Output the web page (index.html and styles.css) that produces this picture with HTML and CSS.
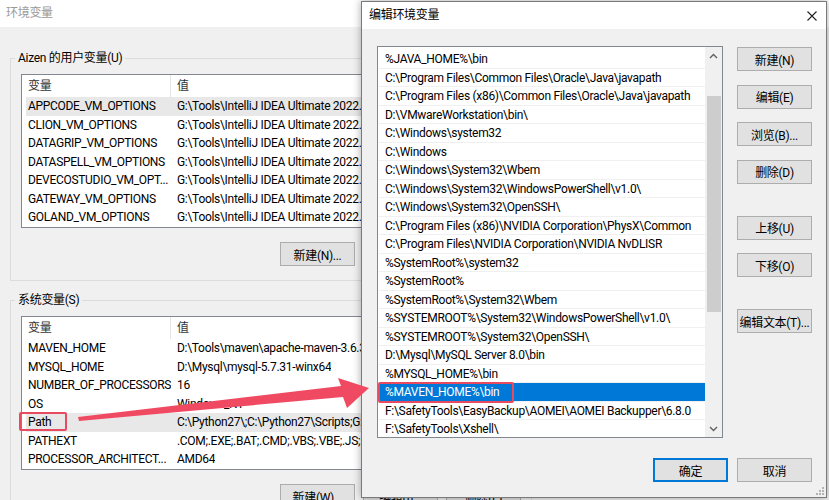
FILE: index.html
```html
<!DOCTYPE html>
<html>
<head>
  <meta charset="utf-8">
  <title>环境变量</title>
  <link rel="stylesheet" href="styles.css">
</head>
<body>
  <!-- window behind: 环境变量 -->
  <div class="env-window">
    <div class="titlebar inactive">环境变量</div>
    <div class="env-body">
      <fieldset class="group">
        <legend>Aizen 的用户变量(U)</legend>
        <div class="listview">
          <div class="lv-header"><span class="col-name">变量</span><span class="col-value">值</span></div>
          <div class="lv-row selected"><span class="col-name">APPCODE_VM_OPTIONS</span><span class="col-value">G:\Tools\IntelliJ IDEA Ultimate 2022.1\bin\appcode.vmoptions</span></div>
          <div class="lv-row"><span class="col-name">CLION_VM_OPTIONS</span><span class="col-value">G:\Tools\IntelliJ IDEA Ultimate 2022.1\bin\clion.vmoptions</span></div>
          <div class="lv-row"><span class="col-name">DATAGRIP_VM_OPTIONS</span><span class="col-value">G:\Tools\IntelliJ IDEA Ultimate 2022.1\bin\datagrip.vmoptions</span></div>
          <div class="lv-row"><span class="col-name">DATASPELL_VM_OPTIONS</span><span class="col-value">G:\Tools\IntelliJ IDEA Ultimate 2022.1\bin\dataspell.vmoptions</span></div>
          <div class="lv-row"><span class="col-name">DEVECOSTUDIO_VM_OPT...</span><span class="col-value">G:\Tools\IntelliJ IDEA Ultimate 2022.1\bin\devecostudio.vmoptions</span></div>
          <div class="lv-row"><span class="col-name">GATEWAY_VM_OPTIONS</span><span class="col-value">G:\Tools\IntelliJ IDEA Ultimate 2022.1\bin\gateway.vmoptions</span></div>
          <div class="lv-row"><span class="col-name">GOLAND_VM_OPTIONS</span><span class="col-value">G:\Tools\IntelliJ IDEA Ultimate 2022.1\bin\goland.vmoptions</span></div>
        </div>
        <div class="group-buttons">
          <button class="btn">新建(N)...</button>
          <button class="btn">编辑(E)...</button>
          <button class="btn">删除(D)</button>
        </div>
      </fieldset>

      <fieldset class="group">
        <legend>系统变量(S)</legend>
        <div class="listview">
          <div class="lv-header"><span class="col-name">变量</span><span class="col-value">值</span></div>
          <div class="lv-row"><span class="col-name">MAVEN_HOME</span><span class="col-value">D:\Tools\maven\apache-maven-3.6.3</span></div>
          <div class="lv-row"><span class="col-name">MYSQL_HOME</span><span class="col-value">D:\Mysql\mysql-5.7.31-winx64</span></div>
          <div class="lv-row"><span class="col-name">NUMBER_OF_PROCESSORS</span><span class="col-value">16</span></div>
          <div class="lv-row"><span class="col-name">OS</span><span class="col-value">Windows_NT</span></div>
          <div class="lv-row selected"><span class="col-name">Path</span><span class="col-value">C:\Python27\;C:\Python27\Scripts;G:\Tools\bin;</span></div>
          <div class="lv-row"><span class="col-name">PATHEXT</span><span class="col-value">.COM;.EXE;.BAT;.CMD;.VBS;.VBE;.JS;.JSE;.WSF;.WSH;.MSC</span></div>
          <div class="lv-row"><span class="col-name">PROCESSOR_ARCHITECT...</span><span class="col-value">AMD64</span></div>
        </div>
        <div class="group-buttons">
          <button class="btn">新建(W)...</button>
          <button class="btn">编辑(I)...</button>
          <button class="btn">删除(L)</button>
        </div>
      </fieldset>
    </div>
  </div>

  <!-- active dialog: 编辑环境变量 -->
  <div class="dialog">
    <div class="titlebar">
      <span>编辑环境变量</span>
      <svg class="close-icon" width="10" height="10" viewBox="0 0 10 10">
        <path d="M0.5 0.5 L9.5 9.5 M9.5 0.5 L0.5 9.5" stroke="#222" stroke-width="1.1" fill="none"/>
      </svg>
    </div>
    <div class="dialog-body">
      <div class="dialog-main">
        <div class="path-list">
          <div class="path-items">
            <div class="path-item">%JAVA_HOME%\bin</div>
            <div class="path-item">C:\Program Files\Common Files\Oracle\Java\javapath</div>
            <div class="path-item">C:\Program Files (x86)\Common Files\Oracle\Java\javapath</div>
            <div class="path-item">D:\VMwareWorkstation\bin\</div>
            <div class="path-item">C:\Windows\system32</div>
            <div class="path-item">C:\Windows</div>
            <div class="path-item">C:\Windows\System32\Wbem</div>
            <div class="path-item">C:\Windows\System32\WindowsPowerShell\v1.0\</div>
            <div class="path-item">C:\Windows\System32\OpenSSH\</div>
            <div class="path-item">C:\Program Files (x86)\NVIDIA Corporation\PhysX\Common</div>
            <div class="path-item">C:\Program Files\NVIDIA Corporation\NVIDIA NvDLISR</div>
            <div class="path-item">%SystemRoot%\system32</div>
            <div class="path-item">%SystemRoot%</div>
            <div class="path-item">%SystemRoot%\System32\Wbem</div>
            <div class="path-item">%SYSTEMROOT%\System32\WindowsPowerShell\v1.0\</div>
            <div class="path-item">%SYSTEMROOT%\System32\OpenSSH\</div>
            <div class="path-item">D:\Mysql\MySQL Server 8.0\bin</div>
            <div class="path-item">%MYSQL_HOME%\bin</div>
            <div class="path-item selected">%MAVEN_HOME%\bin</div>
            <div class="path-item">F:\SafetyTools\EasyBackup\AOMEI\AOMEI Backupper\6.8.0</div>
            <div class="path-item">F:\SafetyTools\Xshell\</div>
          </div>
          <div class="scrollbar">
            <div class="scroll-arrow">
              <svg width="9" height="6" viewBox="0 0 9 6"><polyline points="1,5 4.5,1.5 8,5" fill="none" stroke="#606060" stroke-width="1.4"/></svg>
            </div>
            <div class="scroll-track-top"></div>
            <div class="scroll-thumb"></div>
            <div class="scroll-track"></div>
            <div class="scroll-arrow">
              <svg width="9" height="6" viewBox="0 0 9 6"><polyline points="1,1 4.5,4.5 8,1" fill="none" stroke="#606060" stroke-width="1.4"/></svg>
            </div>
          </div>
        </div>
        <div class="side-buttons">
          <button class="btn">新建(N)</button>
          <button class="btn">编辑(E)</button>
          <button class="btn">浏览(B)...</button>
          <button class="btn">删除(D)</button>
          <button class="btn spaced">上移(U)</button>
          <button class="btn">下移(O)</button>
          <button class="btn spaced">编辑文本(T)...</button>
        </div>
      </div>
      <div class="dialog-footer">
        <button class="btn default">确定</button>
        <button class="btn">取消</button>
      </div>
    </div>
    <svg class="grip" width="10" height="10" viewBox="0 0 10 10" fill="#b4b4b4">
      <rect x="7" y="1" width="2" height="2"/>
      <rect x="4" y="4" width="2" height="2"/><rect x="7" y="4" width="2" height="2"/>
      <rect x="1" y="7" width="2" height="2"/><rect x="4" y="7" width="2" height="2"/><rect x="7" y="7" width="2" height="2"/>
    </svg>
  </div>

  <!-- annotations -->
  <div class="mark mark-path"></div>
  <div class="mark mark-maven"></div>
  <svg class="arrow" width="829" height="500" viewBox="0 0 829 500">
    <polygon points="78,417 341,386 338,378 369,388 347,408 343,397 79,421" fill="#f04a62"/>
  </svg>
</body>
</html>
```

FILE: styles.css
```css
* {
  box-sizing: border-box;
}

body {
  margin: 0;
  width: 829px;
  height: 500px;
  overflow: hidden;
  position: relative;
  background-color: #f0f0f0;
  font-family: Roboto, "Noto Sans CJK SC", sans-serif;
  font-size: 12px;
  letter-spacing: -0.3px;
  color: #000;
}

.env-window {
  height: 500px;
  overflow: hidden;
}

.titlebar {
  height: 27px;
  line-height: 27px;
  padding-left: 6px;
  background-color: #fff;
}

.titlebar.inactive {
  color: #999;
}

.env-body {
  padding: 23px 0 0 10px;
}

.group {
  width: 522px;
  min-width: 0;
  margin: 0 0 11px 0;
  padding: 0 10px 14px 10px;
  border: 1px solid #dcdcdc;
}

.group legend {
  margin-left: -6px;
  padding: 0 3px;
  line-height: 16px;
}

.listview {
  margin-top: 8px;
  height: 154px;
  padding-left: 4px;
  background-color: #fff;
  border: 1px solid #828790;
  overflow: hidden;
}

.lv-header {
  display: flex;
  height: 22px;
  line-height: 22px;
  color: #333;
}

.lv-header .col-name {
  border-right: 1px solid #e5e5e5;
}

.lv-row {
  display: flex;
  height: 18.5px;
  line-height: 18.5px;
}

.lv-row.selected {
  background-color: #e8e8e8;
}

.col-name {
  width: 145px;
  flex-shrink: 0;
  padding-left: 2px;
  white-space: nowrap;
  overflow: hidden;
}

.col-value {
  padding-left: 6px;
  white-space: nowrap;
  overflow: hidden;
}

.group-buttons {
  display: flex;
  justify-content: flex-end;
  gap: 8px;
  margin-top: 14px;
}

.btn {
  width: 75px;
  height: 24px;
  padding: 0;
  background-color: #e1e1e1;
  border: 1px solid #adadad;
  font-family: inherit;
  font-size: 12px;
  letter-spacing: -0.3px;
  color: #000;
}

.btn.default {
  border-color: #0078d7;
  box-shadow: inset 0 0 0 1px #0078d7;
}

/* dialog */
.dialog {
  position: absolute;
  left: 361px;
  top: 1px;
  width: 466px;
  height: 497px;
  background-color: #f0f0f0;
  border: 1px solid #7a7a7a;
  box-shadow: 0 0 8px rgba(0, 0, 0, 0.35);
}

.dialog .titlebar {
  display: flex;
  justify-content: space-between;
  align-items: center;
  padding: 0 9px 0 7px;
}

.dialog-body {
  padding: 17px 14px 0 15px;
}

.dialog-main {
  display: flex;
  gap: 14px;
}

.path-list {
  display: flex;
  width: 346px;
  height: 392px;
  background-color: #fff;
  border: 1px solid #828790;
}

.path-items {
  flex: 1;
  padding: 3px 0 0 1px;
  overflow: hidden;
}

.path-item {
  height: 18.5px;
  line-height: 18px;
  padding-left: 6px;
  border-bottom: 1px solid #f0f0f0;
  white-space: nowrap;
  overflow: hidden;
}

.path-item.selected {
  background-color: #0078d7;
  color: #fff;
}

.scrollbar {
  display: flex;
  flex-direction: column;
  width: 17px;
  background-color: #f0f0f0;
}

.scroll-arrow {
  display: flex;
  align-items: center;
  justify-content: center;
  height: 17px;
}

.scroll-track-top {
  height: 32px;
}

.scroll-thumb {
  height: 216px;
  margin: 0 1px 0 2px;
  background-color: #cdcdcd;
}

.scroll-track {
  flex: 1;
}

.side-buttons {
  display: flex;
  flex-direction: column;
  gap: 13.5px;
  padding-top: 1px;
}

.side-buttons .spaced {
  margin-top: 18.5px;
}

.dialog-footer {
  display: flex;
  justify-content: flex-end;
  gap: 9px;
  margin-top: 20px;
}

.grip {
  position: absolute;
  right: 1px;
  bottom: 1px;
}

/* annotations */
.mark {
  position: absolute;
  border: 2px solid #e84a5f;
  border-radius: 2px;
}

.mark-path {
  left: 19px;
  top: 412px;
  width: 48px;
  height: 19px;
}

.mark-maven {
  left: 378px;
  top: 382px;
  width: 136px;
  height: 21px;
}

.arrow {
  position: absolute;
  left: 0;
  top: 0;
  pointer-events: none;
}
```
